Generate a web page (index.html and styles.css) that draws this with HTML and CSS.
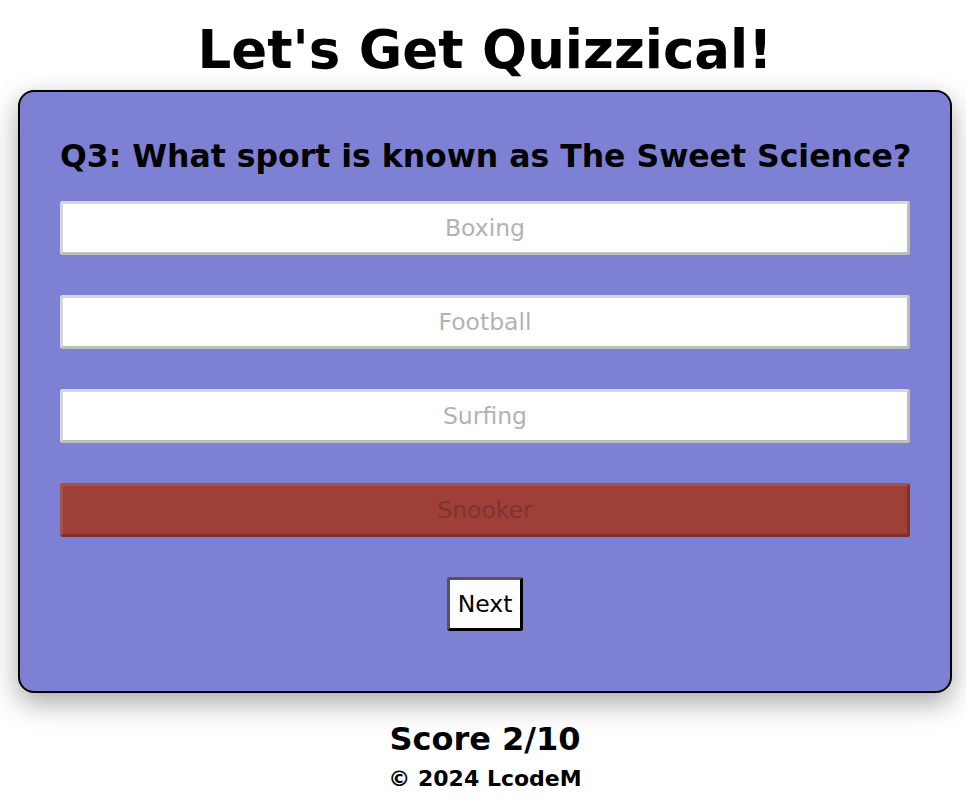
FILE: index.html
```html
<!DOCTYPE html>
<html>
<head>
<meta charset="utf-8">
<link rel="stylesheet" href="styles.css">
</head>
<body>
<div class="page">
  <h1 class="title">Let's Get Quizzical!</h1>
  <div class="card">
    <h2 class="question">Q3: What sport is known as The Sweet Science?</h2>
    <div class="answers">
      <button class="answer">Boxing</button>
      <button class="answer">Football</button>
      <button class="answer">Surfing</button>
      <button class="answer wrong">Snooker</button>
    </div>
    <div class="next-row"><button class="next">Next</button></div>
  </div>
  <div class="score">Score 2/10</div>
  <div class="footer">© 2024 LcodeM</div>
</div>
</body>
</html>
```

FILE: styles.css
```css
html, body {
  margin: 0;
  padding: 0;
  background: #ffffff;
}
body {
  font-family: "DejaVu Sans", sans-serif;
  color: #000;
}
.page {
  width: 934px;
  margin-left: 18px;
  display: flex;
  flex-direction: column;
  align-items: center;
}
.title {
  font-size: 53px;
  font-weight: 700;
  margin: 12px 0 2px 0;
  line-height: 76px;
  height: 76px;
}
.card {
  box-sizing: border-box;
  width: 934px;
  background: #7e80d4;
  border: 2px solid #000;
  border-radius: 16px;
  box-shadow: 0 10px 28px rgba(0,0,0,0.35);
  padding: 44px 40px 60px 40px;
  display: flex;
  flex-direction: column;
}
.question {
  margin: 0;
  font-size: 31.5px;
  font-weight: 700;
  line-height: 40px;
  text-align: center;
  white-space: nowrap;
}
.answers {
  margin-top: 25px;
  display: flex;
  flex-direction: column;
  gap: 40px;
}
.answer {
  height: 54px;
  background: #fff;
  border: 3px solid;
  border-color: #d6d6d6 #bdbdbd #bdbdbd #d6d6d6;
  border-radius: 3px;
  font-family: inherit;
  font-size: 23.5px;
  color: #b3b3b3;
  padding: 0;
}
.answer.wrong {
  background: #9e3f38;
  border-color: #a65049 #7f302b #7f302b #a65049;
  color: #7e3430;
}
.next-row {
  display: flex;
  justify-content: center;
  margin-top: 40px;
}
.next {
  height: 54px;
  width: 76px;
  background: #fff;
  border: 3px solid;
  border-color: #555 #000 #000 #555;
  border-radius: 3px;
  font-family: inherit;
  font-size: 23.5px;
  color: #000;
  padding: 0;
}
.score {
  margin-top: 26px;
  font-size: 32px;
  font-weight: 700;
  line-height: 40px;
}
.footer {
  margin-top: 5px;
  font-size: 22px;
  font-weight: 700;
  line-height: 30px;
}
```
